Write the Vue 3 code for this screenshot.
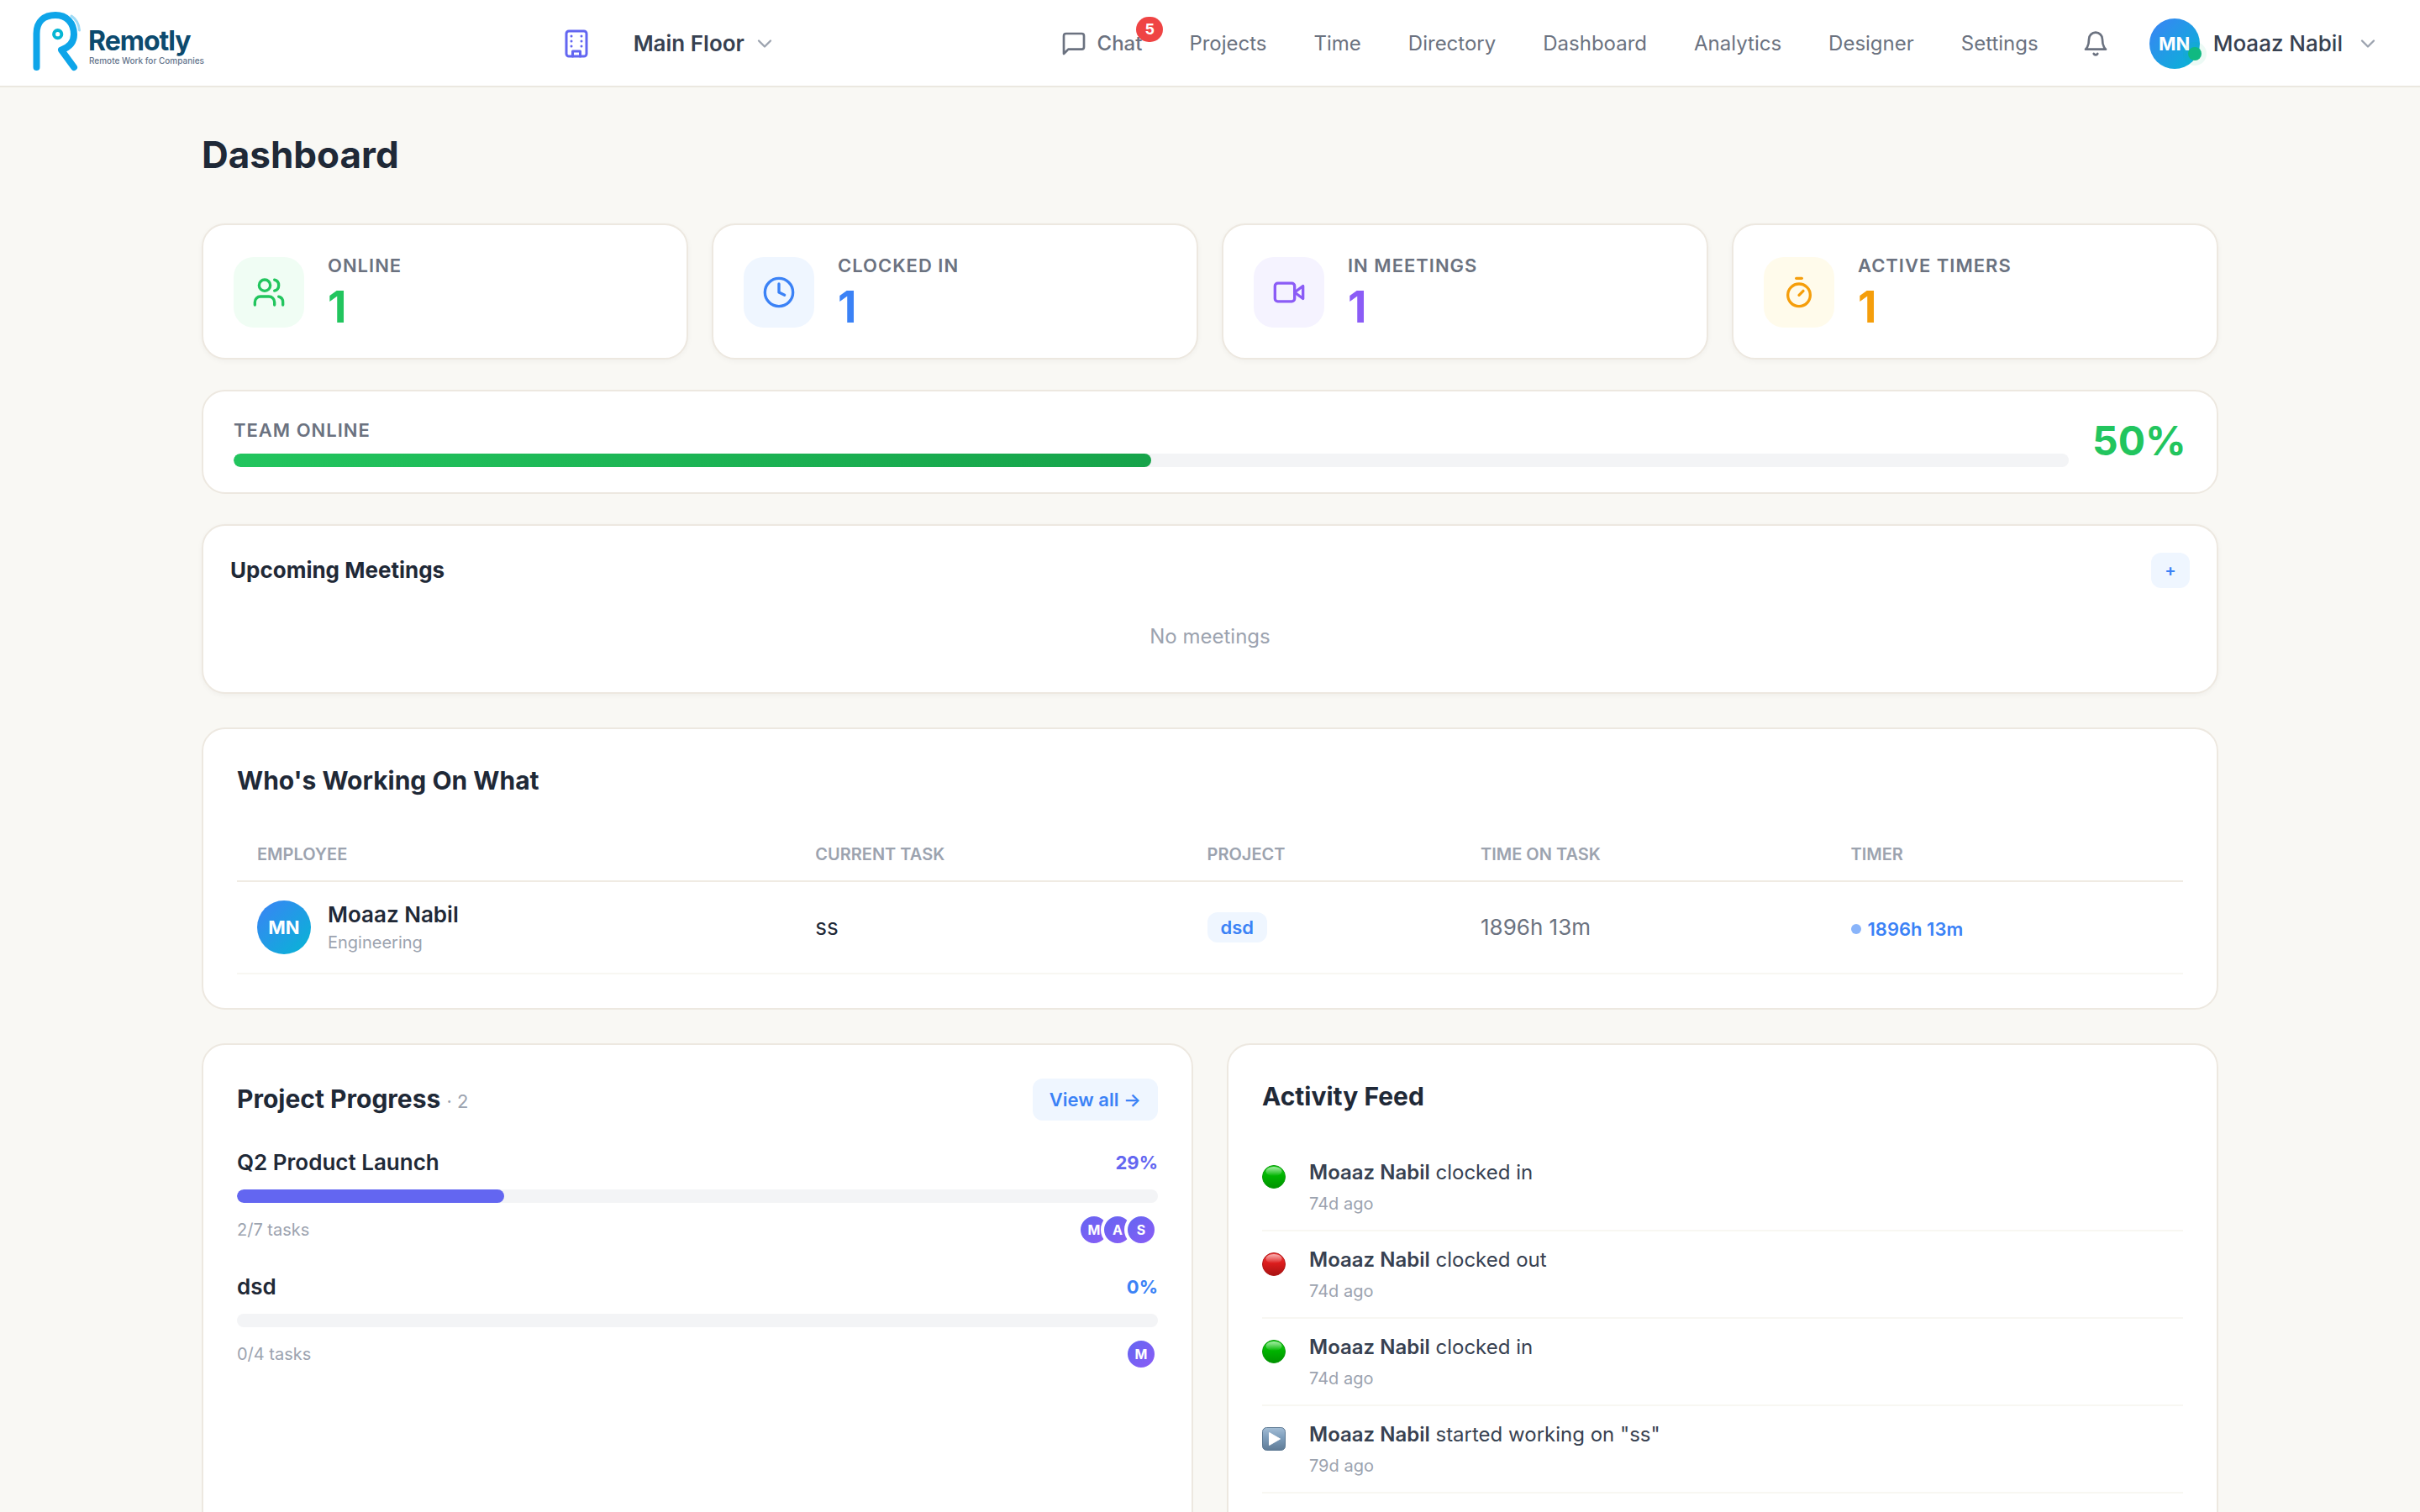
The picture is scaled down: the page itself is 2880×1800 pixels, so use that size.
<script setup>
import { ref } from 'vue'

// Navigation
const unreadChats = ref(5)
const navLinks = ['Projects', 'Time', 'Directory', 'Dashboard', 'Analytics', 'Designer', 'Settings']

// Dashboard data
const stats = ref([
  { key: 'online', label: 'Online', value: 1 },
  { key: 'clocked', label: 'Clocked In', value: 1 },
  { key: 'meetings', label: 'In Meetings', value: 1 },
  { key: 'timers', label: 'Active Timers', value: 1 },
])
const teamOnline = ref(50)

const workers = ref([
  {
    initials: 'MN',
    name: 'Moaaz Nabil',
    department: 'Engineering',
    task: 'ss',
    project: 'dsd',
    time: '1896h 13m',
  },
])

const projects = ref([
  { name: 'Q2 Product Launch', progress: 29, tasks: '2/7 tasks', members: ['M', 'A', 'S'], color: '#6366f1' },
  { name: 'dsd', progress: 0, tasks: '0/4 tasks', members: ['M'], color: '#3b82f6' },
])

const activities = ref([
  { type: 'in', user: 'Moaaz Nabil', action: 'clocked in', when: '74d ago' },
  { type: 'out', user: 'Moaaz Nabil', action: 'clocked out', when: '74d ago' },
  { type: 'in', user: 'Moaaz Nabil', action: 'clocked in', when: '74d ago' },
  { type: 'start', user: 'Moaaz Nabil', action: 'started working on "ss"', when: '79d ago' },
])
</script>

<template>
  <div class="shell">
    <!-- Top bar -->
    <header class="topbar">
      <a href="#" class="logo">
        <svg width="326" height="88" viewBox="0 0 326 88" fill="none" stroke-linecap="round" stroke-linejoin="round">
          <path
            d="M11.500 72V32C11.500 17 21 10 34 10C47 10 56 19 56 33C56 42 51 48 41 51.500L56 72"
            stroke="#0ea5e9"
            stroke-width="8"
          />
          <path d="M53 11C59 15 62 21 62.500 28" stroke="#0ea5e9" stroke-opacity="0.4" stroke-width="3" />
          <circle cx="36.700" cy="32.700" r="4.600" stroke="#06b6d4" stroke-width="4" />
          <text x="73" y="52" class="logo-name">Remotly</text>
          <text x="74" y="68" class="logo-tag">Remote Work for Companies</text>
        </svg>
      </a>

      <div class="floor">
        <button type="button" class="icon-btn building" aria-label="Office">
          <svg width="36" height="36" viewBox="0 0 24 24">
            <rect x="4" y="2" width="16" height="20" rx="2" />
            <path d="M9 22v-4h6v4" />
            <path d="M8 6h.01M16 6h.01M8 10h.01M16 10h.01M8 14h.01M16 14h.01" />
          </svg>
        </button>
        <button type="button" class="floor-select">
          Main Floor
          <svg class="chevron" width="28" height="28" viewBox="0 0 24 24"><path d="m6 9 6 6 6-6" /></svg>
        </button>
      </div>

      <div class="topbar-right">
        <nav class="nav">
          <a href="#" class="nav-link chat">
            <svg width="32" height="32" viewBox="0 0 24 24">
              <path d="M21 15a2 2 0 0 1-2 2H7l-4 4V5a2 2 0 0 1 2-2h14a2 2 0 0 1 2 2z" />
            </svg>
            Chat
            <span class="badge">{{ unreadChats }}</span>
          </a>
          <a v-for="link in navLinks" :key="link" href="#" class="nav-link">{{ link }}</a>
        </nav>
        <button type="button" class="icon-btn bell" aria-label="Notifications">
          <svg width="32" height="32" viewBox="0 0 24 24">
            <path d="M6 8a6 6 0 0 1 12 0c0 7 3 9 3 9H3s3-2 3-9" />
            <path d="M10.300 21a1.940 1.940 0 0 0 3.400 0" />
          </svg>
        </button>
        <button type="button" class="user">
          <span class="avatar avatar-user">MN<i class="presence"></i></span>
          Moaaz Nabil
          <svg class="chevron" width="28" height="28" viewBox="0 0 24 24"><path d="m6 9 6 6 6-6" /></svg>
        </button>
      </div>
    </header>

    <main class="page">
      <h1>Dashboard</h1>

      <!-- Stats -->
      <section class="stats">
        <div v-for="stat in stats" :key="stat.key" class="card stat" :class="stat.key">
          <span class="stat-icon">
            <svg width="40" height="40" viewBox="0 0 24 24">
              <template v-if="stat.key === 'online'">
                <path d="M16 21v-2a4 4 0 0 0-4-4H6a4 4 0 0 0-4 4v2" />
                <circle cx="9" cy="7" r="4" />
                <path d="M22 21v-2a4 4 0 0 0-3-3.870" />
                <path d="M16 3.130a4 4 0 0 1 0 7.750" />
              </template>
              <template v-else-if="stat.key === 'clocked'">
                <circle cx="12" cy="12" r="10" />
                <path d="M12 6v6l4 2" />
              </template>
              <template v-else-if="stat.key === 'meetings'">
                <path d="m16 12 6 4.500v-9z" />
                <rect x="2" y="5.500" width="14" height="13" rx="2" />
              </template>
              <template v-else>
                <path d="M10 2h4" />
                <path d="m12 14 3-3" />
                <circle cx="12" cy="14" r="8" />
              </template>
            </svg>
          </span>
          <div class="stat-text">
            <span class="overline">{{ stat.label }}</span>
            <strong class="stat-value">{{ stat.value }}</strong>
          </div>
        </div>
      </section>

      <!-- Team online -->
      <section class="card team">
        <div class="team-main">
          <span class="overline">Team Online</span>
          <div class="track">
            <div class="fill team-fill" :style="{ width: teamOnline + '%' }"></div>
          </div>
        </div>
        <strong class="team-percent">{{ teamOnline }}%</strong>
      </section>

      <!-- Meetings -->
      <section class="card meetings-card">
        <div class="meetings-head">
          <h3>Upcoming Meetings</h3>
          <button type="button" class="soft-btn add-btn" aria-label="Add meeting">+</button>
        </div>
        <p class="empty">No meetings</p>
      </section>

      <!-- Current work -->
      <section class="card panel">
        <h2 class="panel-title">Who's Working On What</h2>
        <table>
          <thead>
            <tr>
              <th>Employee</th>
              <th>Current Task</th>
              <th>Project</th>
              <th>Time on Task</th>
              <th>Timer</th>
            </tr>
          </thead>
          <tbody>
            <tr v-for="worker in workers" :key="worker.name">
              <td>
                <div class="employee">
                  <span class="avatar avatar-row">{{ worker.initials }}</span>
                  <div class="employee-text">
                    <span class="employee-name">{{ worker.name }}</span>
                    <span class="employee-dept">{{ worker.department }}</span>
                  </div>
                </div>
              </td>
              <td>{{ worker.task }}</td>
              <td><span class="chip">{{ worker.project }}</span></td>
              <td class="muted">{{ worker.time }}</td>
              <td><span class="timer"><i class="timer-dot"></i>{{ worker.time }}</span></td>
            </tr>
          </tbody>
        </table>
      </section>

      <div class="columns">
        <!-- Projects -->
        <section class="card panel">
          <div class="panel-head">
            <h2>Project Progress <small>· {{ projects.length }}</small></h2>
            <button type="button" class="soft-btn view-btn">View all →</button>
          </div>
          <div class="projects">
            <article v-for="project in projects" :key="project.name">
              <div class="project-head">
                <span class="project-name">{{ project.name }}</span>
                <span class="project-percent" :style="{ color: project.color }">{{ project.progress }}%</span>
              </div>
              <div class="track">
                <div class="fill" :style="{ width: project.progress + '%', background: project.color }"></div>
              </div>
              <div class="project-foot">
                <span>{{ project.tasks }}</span>
                <div class="members">
                  <span v-for="member in project.members" :key="member" class="member">{{ member }}</span>
                </div>
              </div>
            </article>
          </div>
        </section>

        <!-- Activity -->
        <section class="card panel">
          <h2 class="panel-title">Activity Feed</h2>
          <ul class="feed">
            <li v-for="(item, index) in activities" :key="index">
              <svg class="feed-icon" width="28" height="28" viewBox="0 0 28 28">
                <defs>
                  <linearGradient :id="'face' + index" x1="0" y1="0" x2="0" y2="1">
                    <stop offset="0" :class="item.type + '-top'" />
                    <stop offset="0.450" :class="item.type + '-mid'" />
                    <stop offset="1" :class="item.type + '-end'" />
                  </linearGradient>
                  <linearGradient :id="'gloss' + index" x1="0" y1="0" x2="0" y2="1">
                    <stop offset="0" stop-color="#fff" stop-opacity="0.600" />
                    <stop offset="1" stop-color="#fff" stop-opacity="0" />
                  </linearGradient>
                </defs>
                <template v-if="item.type === 'start'">
                  <rect x="0.500" y="0.500" width="27" height="27" rx="5" :fill="`url(#face${index})`" stroke="#5d7993" />
                  <path d="M8.500 6.500v15l13-7.500z" fill="#fff" stroke="#fff" stroke-linejoin="round" />
                </template>
                <template v-else>
                  <circle cx="14" cy="14" r="13.500" :fill="`url(#face${index})`" :class="item.type + '-ring'" />
                  <ellipse cx="14" cy="7.500" rx="9.500" ry="5.500" :fill="`url(#gloss${index})`" />
                </template>
              </svg>
              <div class="feed-text">
                <span class="feed-line"><b>{{ item.user }}</b> {{ item.action }}</span>
                <span class="feed-when">{{ item.when }}</span>
              </div>
            </li>
          </ul>
        </section>
      </div>
    </main>
  </div>
</template>

<style>
body {
  background: #f9f8f4;
}
</style>

<style scoped>
.shell {
  height: 100vh;
  overflow: hidden;
  background: #f9f8f4;
  color: #1f2937;
  font-family: Inter, "Liberation Sans", sans-serif;
}

.shell *,
.shell {
  box-sizing: border-box;
}

button {
  border: none;
  padding: 0;
  background: none;
  font-family: inherit;
  cursor: pointer;
}

a {
  text-decoration: none;
}

h1,
h2,
h3,
p,
ul {
  margin: 0;
  padding: 0;
}

.floor svg,
.topbar-right svg,
.stat-icon svg {
  fill: none;
  stroke: currentColor;
  stroke-width: 2;
  stroke-linecap: round;
  stroke-linejoin: round;
}

/* Top bar */
.topbar {
  display: flex;
  align-items: center;
  justify-content: space-between;
  height: 104px;
  padding: 2px 48px 0 32px;
  background: #fff;
  border-bottom: 2px solid #ebe8e0;
}

.logo {
  display: flex;
}

.logo-name {
  font-size: 32px;
  font-weight: 700;
  letter-spacing: -1px;
  fill: #0c4a6e;
}

.logo-tag {
  font-size: 10px;
  font-weight: 500;
  fill: #64748b;
}

.floor {
  display: flex;
  align-items: center;
  gap: 50px;
}

.icon-btn {
  display: flex;
}

.building {
  color: #6366f1;
}

.floor-select,
.user {
  display: flex;
  align-items: center;
  color: #374151;
  font-size: 26px;
  line-height: 34px;
  font-weight: 600;
}

.floor-select {
  gap: 10px;
}

.chevron {
  color: #9ca3af;
}

.topbar-right {
  display: flex;
  align-items: center;
}

.nav {
  display: flex;
  align-items: center;
}

.nav-link {
  padding: 16px 28px;
  color: #6b7280;
  font-size: 24px;
  line-height: 32px;
}

.chat {
  position: relative;
  display: flex;
  align-items: center;
  gap: 12px;
  font-weight: 500;
}

.badge {
  position: absolute;
  top: 0;
  right: 3px;
  min-width: 32px;
  height: 30px;
  border-radius: 16px;
  background: #ef4444;
  color: #fff;
  font-size: 18px;
  font-weight: 700;
  line-height: 30px;
  text-align: center;
}

.bell {
  margin: 0 48px 0 24px;
  color: #6b7280;
}

.user {
  gap: 16px;
  font-weight: 500;
}

.avatar {
  display: flex;
  align-items: center;
  justify-content: center;
  flex: none;
  border-radius: 50%;
  background: linear-gradient(135deg, #3b82f6, #06b6d4);
  color: #fff;
  font-size: 22px;
  font-weight: 700;
}

.avatar-user {
  position: relative;
  width: 60px;
  height: 60px;
}

.presence {
  position: absolute;
  right: -2px;
  bottom: 10px;
  width: 16px;
  height: 16px;
  border-radius: 50%;
  background: #10b981;
  box-shadow: 0 0 0 6px rgba(16, 185, 129, 0.08);
}

/* Page */
.page {
  max-width: 2400px;
  margin: 0 auto;
  padding-top: 56px;
}

h1 {
  margin-bottom: 58px;
  font-size: 44px;
  line-height: 48px;
  font-weight: 700;
}

.card {
  background: #fff;
  border: 2px solid #ede8e0;
  border-radius: 28px;
}

.overline {
  color: #6b7280;
  font-size: 22px;
  line-height: 24px;
  font-weight: 600;
  letter-spacing: 1px;
  text-transform: uppercase;
}

.stats {
  display: grid;
  grid-template-columns: repeat(4, 1fr);
  gap: 28px;
  margin-bottom: 36px;
}

.stat {
  display: flex;
  align-items: center;
  gap: 28px;
  padding: 36px 36px 34px;
  box-shadow: 0 2px 6px rgba(0, 0, 0, 0.04);
}

.stat-icon {
  display: flex;
  align-items: center;
  justify-content: center;
  width: 84px;
  height: 84px;
  border-radius: 24px;
}

.stat-text {
  display: flex;
  flex-direction: column;
  gap: 12px;
}

.stat-value {
  font-size: 52px;
  line-height: 52px;
  font-weight: 700;
}

.online .stat-icon {
  background: #f0fdf4;
}

.online .stat-icon,
.online .stat-value {
  color: #22c55e;
}

.clocked .stat-icon {
  background: #eff6ff;
}

.clocked .stat-icon,
.clocked .stat-value {
  color: #3b82f6;
}

.meetings .stat-icon {
  background: #f5f3ff;
}

.meetings .stat-icon,
.meetings .stat-value {
  color: #8b5cf6;
}

.timers .stat-icon {
  background: #fffbeb;
}

.timers .stat-icon,
.timers .stat-value {
  color: #f59e0b;
}

.track {
  height: 16px;
  border-radius: 8px;
  background: #f3f4f6;
  overflow: hidden;
}

.fill {
  height: 100%;
  border-radius: 8px;
}

.team {
  display: flex;
  align-items: flex-start;
  gap: 28px;
  margin-bottom: 36px;
  padding: 34px 36px 30px;
}

.team-main {
  display: flex;
  flex-direction: column;
  gap: 16px;
  flex: 1;
}

.team-fill {
  background: linear-gradient(135deg, #22c55e, #16a34a);
}

.team-percent {
  min-width: 112px;
  color: #22c55e;
  font-size: 48px;
  line-height: 50px;
  font-weight: 700;
}

.meetings-card {
  margin-bottom: 40px;
  padding: 32px;
  box-shadow: 0 2px 6px rgba(0, 0, 0, 0.04);
}

.meetings-head,
.panel-head,
.project-head,
.project-foot {
  display: flex;
  align-items: center;
  justify-content: space-between;
}

h3 {
  font-size: 26px;
  line-height: 40px;
  font-weight: 700;
}

.soft-btn {
  background: #eff6ff;
  color: #3b82f6;
  font-weight: 600;
}

.add-btn {
  width: 46px;
  height: 42px;
  border-radius: 12px;
  font-size: 20px;
}

.empty {
  padding: 43px 0 19px;
  color: #9ca3af;
  font-size: 24px;
  line-height: 30px;
  text-align: center;
}

.panel {
  padding: 40px;
}

h2 {
  font-size: 30px;
  line-height: 42px;
  font-weight: 700;
}

.panel-title {
  margin-bottom: 36px;
}

/* Work table */
table {
  width: 100%;
  border-spacing: 0;
}

th {
  padding: 20px 24px;
  border-bottom: 2px solid #f0ebe3;
  color: #9ca3af;
  font-size: 20px;
  line-height: 22px;
  font-weight: 600;
  text-align: left;
  text-transform: uppercase;
}

td {
  padding: 22px 24px;
  border-bottom: 2px solid #f8f7f2;
  font-size: 26px;
  line-height: 32px;
}

.employee {
  display: flex;
  align-items: center;
  gap: 20px;
}

.avatar-row {
  width: 64px;
  height: 64px;
}

.employee-text {
  display: flex;
  flex-direction: column;
  gap: 2px;
}

.employee-name {
  font-weight: 600;
  line-height: 34px;
}

.employee-dept {
  color: #9ca3af;
  font-size: 20px;
  line-height: 28px;
}

.chip {
  display: block;
  width: fit-content;
  padding: 2px 16px;
  border-radius: 12px;
  background: #eff6ff;
  color: #3b82f6;
  font-size: 22px;
  font-weight: 600;
}

.muted {
  color: #6b7280;
}

.timer {
  display: inline-flex;
  align-items: center;
  gap: 8px;
  color: #3b82f6;
  font-size: 22px;
  font-weight: 600;
}

.timer-dot {
  width: 12px;
  height: 12px;
  border-radius: 50%;
  background: #3b82f6;
  opacity: 0.6;
}

/* Bottom row */
.columns {
  display: grid;
  grid-template-columns: 1fr 1fr;
  gap: 40px;
  margin-top: 40px;
}

.columns .panel {
  min-height: 700px;
}

.panel-head {
  margin-bottom: 34px;
}

small {
  color: #9ca3af;
  font-size: 22px;
  font-weight: 400;
}

.view-btn {
  height: 50px;
  padding: 0 20px;
  border-radius: 12px;
  font-size: 22px;
}

.projects {
  display: flex;
  flex-direction: column;
  gap: 32px;
}

.project-head {
  margin-bottom: 16px;
  line-height: 32px;
}

.project-name {
  font-size: 26px;
  font-weight: 600;
}

.project-percent {
  font-size: 22px;
  font-weight: 700;
}

.project-foot {
  margin-top: 12px;
  color: #9ca3af;
  font-size: 20px;
}

.members {
  display: flex;
}

.member {
  display: flex;
  align-items: center;
  justify-content: center;
  width: 40px;
  height: 40px;
  border: 4px solid #fff;
  border-radius: 50%;
  background: linear-gradient(135deg, #6366f1, #8b5cf6);
  color: #fff;
  font-size: 16px;
  font-weight: 700;
}

.member + .member {
  margin-left: -12px;
}

.feed {
  list-style: none;
}

.feed li {
  display: flex;
  gap: 28px;
  padding: 20px 0;
  border-bottom: 2px solid #f8f7f2;
}

.feed-icon {
  margin-top: 5px;
}

.feed-text {
  display: flex;
  flex-direction: column;
  gap: 12px;
}

.feed-line {
  color: #374151;
  font-size: 24px;
  line-height: 28px;
}

.feed-line b {
  font-weight: 600;
}

.feed-when {
  color: #9ca3af;
  font-size: 20px;
  line-height: 22px;
}

.in-top {
  stop-color: #1fd01f;
}

.in-mid {
  stop-color: #00b400;
}

.in-end {
  stop-color: #009200;
}

.in-ring {
  stroke: #0a9a0a;
}

.out-top {
  stop-color: #f04040;
}

.out-mid {
  stop-color: #dc1c1c;
}

.out-end {
  stop-color: #a81212;
}

.out-ring {
  stroke: #b01818;
}

.start-top {
  stop-color: #a3bdd5;
}

.start-mid {
  stop-color: #7d9dbb;
}

.start-end {
  stop-color: #5f7b96;
}
</style>
